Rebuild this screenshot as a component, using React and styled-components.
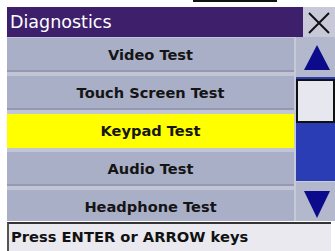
import styled, { createGlobalStyle } from "styled-components";

const GlobalStyle = createGlobalStyle`
  html, body {
    margin: 0;
    padding: 0;
    background: #ffffff;
  }
  body {
    font-family: "DejaVu Sans", Verdana, sans-serif;
  }
`;

const items = [
  "Video Test",
  "Touch Screen Test",
  "Keypad Test",
  "Audio Test",
  "Headphone Test",
];

function App() {
  return (
    <>
      <GlobalStyle />
      <Page>
        <TopMark />
        <Screen>
          <TitleBar>
            <Title>Diagnostics</Title>
            <CloseButton>
              <svg width="24" height="22" viewBox="0 0 24 22">
                <path d="M2 1 L22 21 M22 1 L2 21" stroke="#111" strokeWidth="2" fill="none" />
              </svg>
            </CloseButton>
          </TitleBar>

          <Body>
            <List>
              {items.map((name, i) => (
                <Row key={name} $active={i === 2}>
                  {name}
                </Row>
              ))}
            </List>

            <ScrollBar>
              <ArrowButton>
                <svg width="26" height="25" viewBox="0 0 26 25">
                  <polygon points="13,0 26,25 0,25" fill="#0b0b8c" />
                </svg>
              </ArrowButton>
              <Track>
                <Thumb />
              </Track>
              <ArrowButton $down>
                <svg width="26" height="27" viewBox="0 0 26 27">
                  <polygon points="0,0 26,0 13,27" fill="#0b0b8c" />
                </svg>
              </ArrowButton>
            </ScrollBar>
          </Body>

          <StatusBar>Press ENTER or ARROW keys</StatusBar>
        </Screen>
      </Page>
    </>
  );
}
export default App;

const Page = styled.div`
  position: relative;
  width: 335px;
  height: 251px;
  padding: 7px 0 0 7px;
  box-sizing: border-box;
  overflow: hidden;
  background: #ffffff;
`;

const TopMark = styled.div`
  position: absolute;
  top: 0;
  left: 193px;
  width: 84px;
  height: 2px;
  background: #111;
`;

const Screen = styled.div`
  display: flex;
  flex-direction: column;
  width: 328px;
  height: 244px;
`;

const TitleBar = styled.div`
  display: flex;
  height: 30px;
`;

const Title = styled.div`
  flex: 1;
  background: #3e1f6c;
  color: #ffffff;
  font-size: 17.5px;
  line-height: 30px;
  padding-left: 3px;
`;

const CloseButton = styled.div`
  width: 32px;
  background: #c7c9d9;
  display: flex;
  align-items: center;
  justify-content: center;
  padding-top: 1px;
`;

const Body = styled.div`
  display: flex;
  height: 184px;
  background: #a3a7c0;
`;

const List = styled.div`
  width: 287px;
  display: flex;
  flex-direction: column;
  gap: 4px;
  padding-top: 1px;
  overflow: hidden;
  background: #c2c5d6;
`;

const Row = styled.div`
  flex: 0 0 34px;
  display: flex;
  align-items: center;
  justify-content: center;
  box-sizing: border-box;
  background: ${(p) => (p.$active ? "#ffff00" : "#aaafc8")};
  border-bottom: 2px solid ${(p) => (p.$active ? "#ffff00" : "#9498b2")};
  color: #151515;
  font-size: 14.6px;
  font-weight: 700;
`;

const ScrollBar = styled.div`
  flex: 1;
  display: flex;
  flex-direction: column;
  border-left: 2px solid #c6c9d8;
  background: #b2b6cb;
`;

const ArrowButton = styled.div`
  height: 40px;
  display: flex;
  justify-content: center;
  align-items: ${(p) => (p.$down ? "flex-start" : "center")};
  padding-top: ${(p) => (p.$down ? "9px" : "0")};
  padding-left: 2px;
  box-sizing: border-box;
  background: #b4b8cd;
  border-top: ${(p) => (p.$down ? "1px solid #c9ccda" : "none")};
`;

const Track = styled.div`
  flex: 1;
  background: #2a3db4;
`;

const Thumb = styled.div`
  height: 44px;
  box-sizing: border-box;
  background: #e7e7ef;
  border: 2px solid #111;
  margin-top: 2px;
`;

const StatusBar = styled.div`
  width: 324px;
  height: 29px;
  box-sizing: border-box;
  margin-top: 1px;
  background: #e9e9ef;
  border-top: 2px solid #333;
  border-left: 2px solid #555;
  color: #111;
  font-size: 14.7px;
  font-weight: 700;
  line-height: 26px;
  padding-left: 2px;
`;
